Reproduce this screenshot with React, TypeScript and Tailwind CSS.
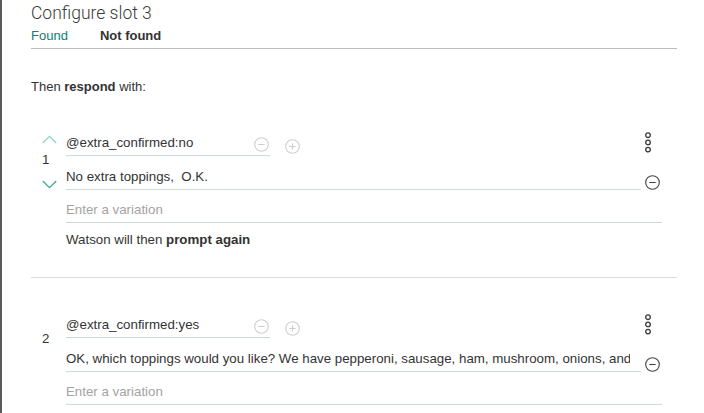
import React from 'react';

const CircleIcon = ({ plus = false, color }: { plus?: boolean; color: string }) => (
    <svg width="15" height="15" viewBox="0 0 15 15" fill="none" stroke={color} strokeWidth="1.1">
        <circle cx="7.5" cy="7.5" r="6.8" />
        <line x1="4.3" y1="7.5" x2="10.7" y2="7.5" />
        {plus && <line x1="7.5" y1="4.3" x2="7.5" y2="10.7" />}
    </svg>
);

const Kebab = () => (
    <svg width="8" height="22" viewBox="0 0 8 22" fill="none" stroke="#3a3a3a" strokeWidth="1.3">
        <circle cx="4" cy="3.2" r="2.3" />
        <circle cx="4" cy="10.4" r="2.3" />
        <circle cx="4" cy="17.6" r="2.3" />
    </svg>
);

type Resp = { idx: number; condition: string; text: string; arrows: boolean; footer?: boolean };

const ResponseBlock = ({ idx, condition, text, arrows, footer }: Resp) => (
    <div className={`flex pt-[38px] ${footer ? 'pb-[28px] border-b border-[#dcdcdc]' : ''}`}>
        {/* order controls */}
        <div className="w-[35px] pl-[11px] flex flex-col items-start">
            {arrows ? (
                <>
                    <svg width="15" height="9" viewBox="0 0 15 9" fill="none" stroke="#8ed1c6" strokeWidth="1.2" className="mt-[1px]">
                        <polyline points="0.8,8 7.5,1.3 14.2,8" />
                    </svg>
                    <span className="mt-[7px] leading-[18px]">{idx}</span>
                    <svg width="15" height="9" viewBox="0 0 15 9" fill="none" stroke="#3aa696" strokeWidth="1.2" className="mt-[11px]">
                        <polyline points="0.8,1 7.5,7.7 14.2,1" />
                    </svg>
                </>
            ) : (
                <span className="mt-[14px] leading-[18px]">{idx}</span>
            )}
        </div>

        <div className="w-[611px] flex flex-col">
            <div className="flex items-start">
                <div className="w-[204px] flex items-center justify-between pb-[3px] border-b border-[#cfd9d8]">
                    <span className="leading-[18px]">{condition}</span>
                    <span className="mr-[1px] mt-[3px] flex"><CircleIcon color="#cdcdcd" /></span>
                </div>
                <span className="ml-[15px] mt-[5px] flex"><CircleIcon plus color="#cdcdcd" /></span>
                <span className="ml-auto mr-[25px] -mt-[2px] flex"><Kebab /></span>
            </div>

            <div className="flex items-end mt-[12px]">
                <div className="w-[575px] pr-[11px] pb-[3px] border-b border-[#cfd9d8]">
                    <div className="leading-[18px] whitespace-pre overflow-hidden">{text}</div>
                </div>
                <span className="ml-[4px] flex"><CircleIcon color="#444444" /></span>
            </div>

            <div className="w-[596px] mt-[11px] pb-[3px] border-b border-[#cfd9d8]">
                <div className="leading-[18px] text-[#a3a3a3]">Enter a variation</div>
            </div>

            {footer && (
                <div className="mt-[8px] leading-[18px]">
                    Watson will then <span className="font-bold">prompt again</span>
                </div>
            )}
        </div>
    </div>
);

export default function App() {
    return (
        <div className="w-[704px] h-[413px] overflow-hidden bg-white border-l-2 border-[#5a5a5a] font-['Liberation_Sans',Arial,sans-serif] text-[13.3px] text-[#333333]">
            <div className="pl-[29px] pr-[27px]">
                <h1 className="pt-[1px] text-[17.5px] leading-[24px] font-light text-[#3a3a3a] font-['Roboto','Liberation_Sans',sans-serif]">Configure slot 3</h1>

                <div className="flex mt-[2px] pb-[3px] border-b border-[#bdbdbd] text-[13px] leading-[18px]">
                    <span className="text-[#008571]">Found</span>
                    <span className="ml-[32px] font-bold">Not found</span>
                </div>

                <p className="mt-[29px] text-[13px] leading-[18px]">
                    Then <span className="font-bold">respond</span> with:
                </p>

                <ResponseBlock idx={1} condition="@extra_confirmed:no" text="No extra toppings,  O.K." arrows footer />
                <ResponseBlock
                    idx={2}
                    condition="@extra_confirmed:yes"
                    text="OK, which toppings would you like? We have pepperoni, sausage, ham, mushroom, onions, and peppers."
                    arrows={false}
                />
            </div>
        </div>
    );
}
